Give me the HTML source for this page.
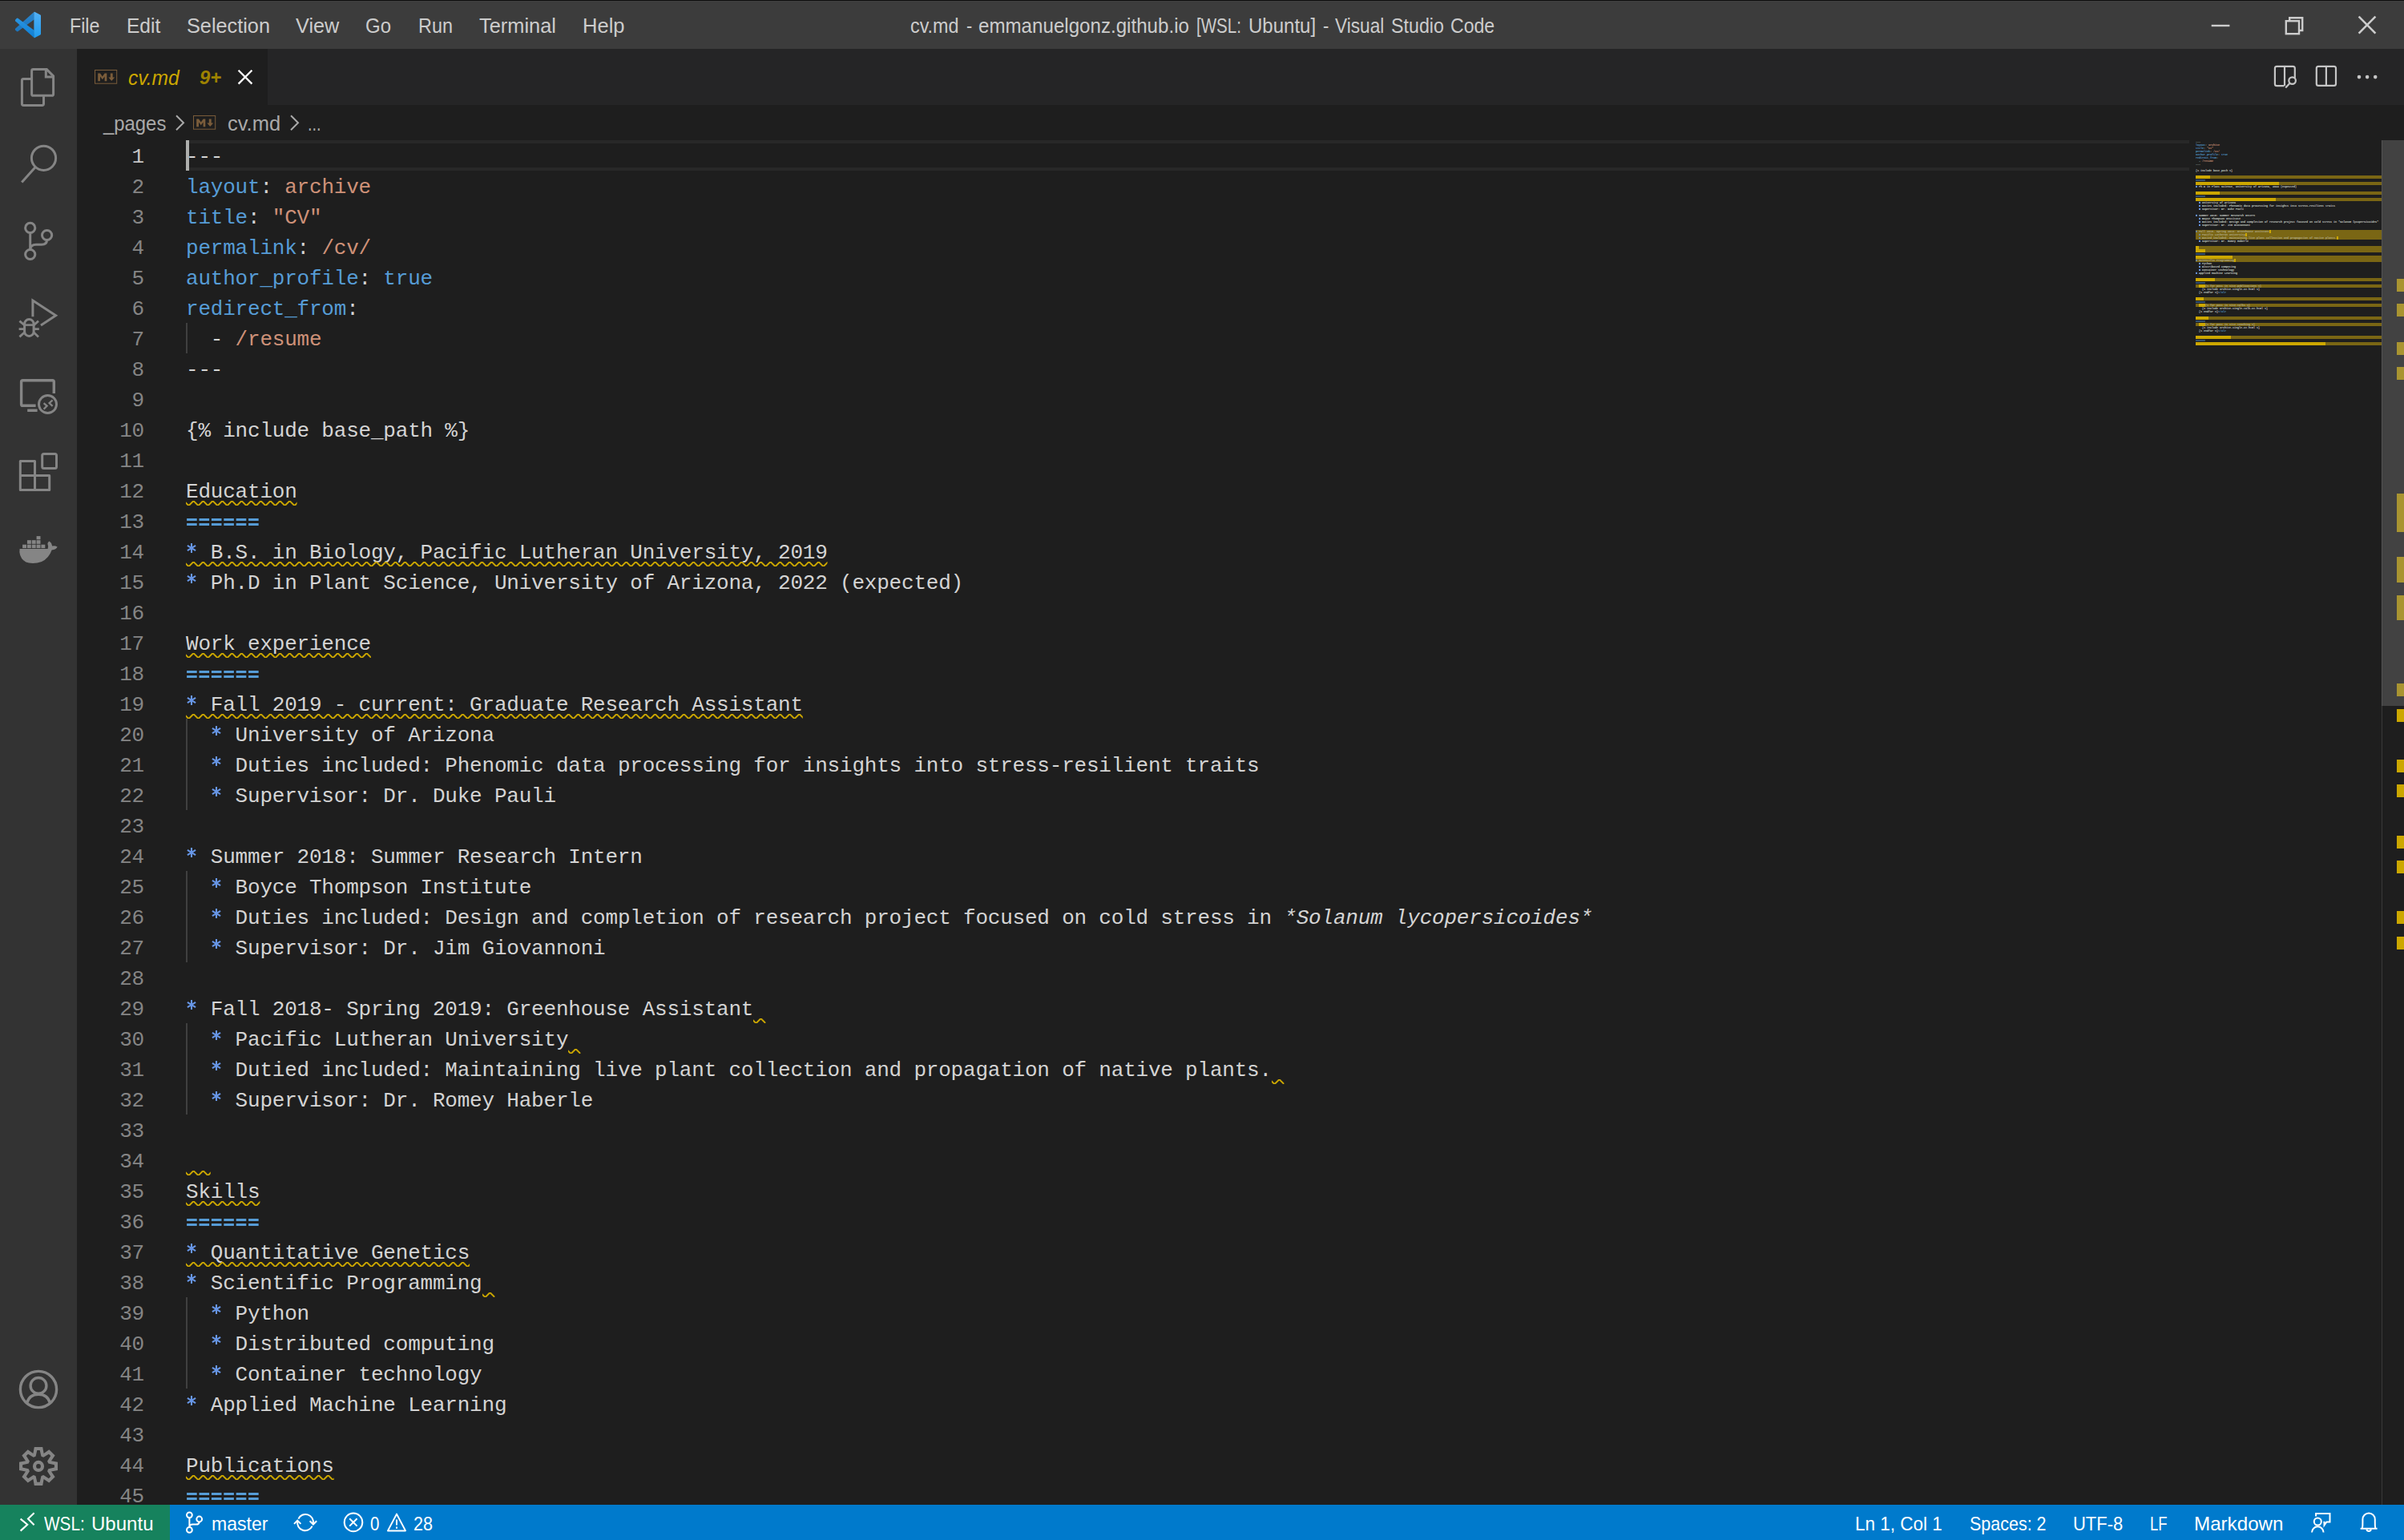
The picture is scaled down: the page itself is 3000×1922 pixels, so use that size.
<!DOCTYPE html>
<html><head><meta charset="utf-8"><title>cv.md - Visual Studio Code</title>
<style>
html,body{margin:0;padding:0;background:#1e1e1e;width:3000px;height:1922px;overflow:hidden}
body{position:relative;font-family:"Liberation Sans",sans-serif;-webkit-font-smoothing:antialiased}
.a{position:absolute}
.t{position:absolute;white-space:pre;line-height:1;transform-origin:0 0}
.ln{position:absolute;left:96px;width:84px;height:38px;line-height:38px;text-align:right;color:#858585;font-family:"Liberation Mono",monospace;font-size:26px;letter-spacing:-0.2px}
.cl{position:absolute;left:232px;height:38px;line-height:38px;white-space:pre;color:#d4d4d4;font-family:"Liberation Mono",monospace;font-size:26px;letter-spacing:-0.206px}
.k{color:#569cd6}.s{color:#ce9178}.st{display:inline-block;width:15.394px;height:1px;position:relative;letter-spacing:0}.st svg{left:-0.6px;bottom:4.8px}.i{font-style:italic}
.ig{position:absolute;left:232px;width:2px;height:38px;background:#404040}
.sq{position:absolute;height:6px}
svg{position:absolute;overflow:visible}
</style></head>
<body>
<svg width="0" height="0" style="left:0;top:0"><defs><pattern id="sq" width="12" height="6" patternUnits="userSpaceOnUse"><g fill="#cca700" transform="scale(2)"><polygon points="5.5,0 2.5,3 1.1,3 4.1,0"/><polygon points="4,0 6,2 6,0.6 5.4,0"/><polygon points="0,2 1,3 2.4,3 0,0.6"/></g></pattern></defs></svg>
<div class="a" style="left:0px;top:0px;width:3000px;height:61px;background:#3c3c3c;"></div>
<div class="a" style="left:0px;top:0px;width:3000px;height:1px;background:#0c0c0c;"></div>
<div class="a" style="left:0px;top:1px;width:3000px;height:1px;background:#404040;"></div>
<div class="a" style="left:0px;top:61px;width:96px;height:1817px;background:#333333;"></div>
<div class="a" style="left:96px;top:61px;width:2904px;height:70px;background:#252526;"></div>
<div class="a" style="left:96px;top:61px;width:238px;height:70px;background:#1e1e1e;"></div>
<div class="a" style="left:0px;top:1878px;width:3000px;height:44px;background:#007acc;"></div>
<div class="a" style="left:0px;top:1878px;width:212px;height:44px;background:#16825d;"></div>
<span class="t" style="left:87.0px;top:19.3px;font-size:26px;color:#cccccc;transform:scaleX(0.8911);">File</span>
<span class="t" style="left:157.7px;top:19.3px;font-size:26px;color:#cccccc;transform:scaleX(0.9431);">Edit</span>
<span class="t" style="left:233.0px;top:19.3px;font-size:26px;color:#cccccc;transform:scaleX(0.9721);">Selection</span>
<span class="t" style="left:369.0px;top:19.3px;font-size:26px;color:#cccccc;transform:scaleX(0.9714);">View</span>
<span class="t" style="left:456.0px;top:19.3px;font-size:26px;color:#cccccc;transform:scaleX(0.9219);">Go</span>
<span class="t" style="left:522.0px;top:19.3px;font-size:26px;color:#cccccc;transform:scaleX(0.9013);">Run</span>
<span class="t" style="left:598.0px;top:19.3px;font-size:26px;color:#cccccc;transform:scaleX(0.9768);">Terminal</span>
<span class="t" style="left:727.0px;top:19.3px;font-size:26px;color:#cccccc;transform:scaleX(0.9826);">Help</span>
<span class="t" style="left:1135.9px;top:19.3px;font-size:26px;color:#cccccc;transform:scaleX(0.8982);">cv.md</span>
<span class="t" style="left:1205.8px;top:19.3px;font-size:26px;color:#cccccc;transform:scaleX(0.8381);">-</span>
<span class="t" style="left:1220.5px;top:19.3px;font-size:26px;color:#cccccc;transform:scaleX(0.9281);">emmanuelgonz.github.io</span>
<span class="t" style="left:1493.0px;top:19.3px;font-size:26px;color:#cccccc;transform:scaleX(0.7904);">[WSL:</span>
<span class="t" style="left:1557.6px;top:19.3px;font-size:26px;color:#cccccc;transform:scaleX(0.9240);">Ubuntu]</span>
<span class="t" style="left:1650.7px;top:19.3px;font-size:26px;color:#cccccc;transform:scaleX(0.8496);">-</span>
<span class="t" style="left:1666.0px;top:19.3px;font-size:26px;color:#cccccc;transform:scaleX(0.8730);">Visual</span>
<span class="t" style="left:1735.6px;top:19.3px;font-size:26px;color:#cccccc;transform:scaleX(0.8940);">Studio</span>
<span class="t" style="left:1809.5px;top:19.3px;font-size:26px;color:#cccccc;transform:scaleX(0.8883);">Code</span>
<svg width="3000" height="140" style="left:0;top:0" viewBox="0 0 3000 140">
<defs><linearGradient id="lg1" x1="0" y1="0" x2="0" y2="1"><stop offset="0" stop-color="#52b0f5"/><stop offset="1" stop-color="#1f9cf0"/></linearGradient><linearGradient id="lg2" x1="0" y1="0" x2="0" y2="1"><stop offset="0" stop-color="#2b86cd"/><stop offset="1" stop-color="#1c75bd"/></linearGradient><linearGradient id="lg3" x1="0" y1="0" x2="0" y2="1"><stop offset="0" stop-color="#2b95e0"/><stop offset="1" stop-color="#0d7fd6"/></linearGradient></defs>
<path d="M42.4,14.9 L42.8,24.2 L22.3,39.3 Q21.5,39.6 20.7,38.9 L19.1,37.3 Q18.5,36.4 19.3,35.6 Z" fill="url(#lg2)"/>
<path d="M22.3,22.7 L42.8,38 L42.4,47 L19.3,26.4 Q18.5,25.6 19.1,24.7 L20.7,23.1 Q21.5,22.4 22.3,22.7 Z" fill="url(#lg3)"/>
<path d="M42.4,14.9 Q42.9,14.6 43.6,15 L50.3,18.4 Q51,18.8 51,19.6 L51,42.3 Q51,43.1 50.3,43.5 L43.6,46.9 Q42.9,47.3 42.4,47 Z" fill="url(#lg1)"/>
<g fill="none" stroke="#cccccc" stroke-width="2.4"><path d="M2759.7,32 H2782.4"/><rect x="2852.8" y="26.2" width="16.2" height="16" /><path d="M2857.2,26 V22.2 H2873.2 V38 H2869.2"/><path d="M2943.6,20.6 L2964.4,41.6 M2964.4,20.6 L2943.6,41.6" stroke-width="2.6"/></g>
<g fill="none" stroke="#c5c5c5" stroke-width="2.2"><path d="M2863.8,97.5 V85.3 Q2863.8,82.9 2861.4,82.9 H2841.3 Q2838.9,82.9 2838.9,85.3 V104.7 Q2838.9,107.1 2841.3,107.1 H2850.5 M2851,82.9 V107.1"/><circle cx="2860.6" cy="100.6" r="4.3"/><path d="M2857.6,103.8 L2852.2,109.6"/><rect x="2890.8" y="82.9" width="24.2" height="24" rx="2.4"/><path d="M2902.9,82.9 V106.9"/></g>
<g fill="#c5c5c5"><circle cx="2944" cy="96.1" r="2.3"/><circle cx="2954.1" cy="96.1" r="2.3"/><circle cx="2964.2" cy="96.1" r="2.3"/></g>
<path d="M297.6,87.8 L314.4,104.6 M314.4,87.8 L297.6,104.6" stroke="#ffffff" stroke-width="2.3" fill="none"/>
</svg>
<svg width="30" height="20" style="left:117.9px;top:87px" viewBox="0 0 30 20"><rect x="0.5" y="0.5" width="27.2" height="16.7" fill="none" stroke="#7a5c3a" stroke-width="1"/><path d="M4.2,14.2 V4.4 H7 L9.8,8.4 L12.6,4.4 H15.3 V14.2 H12.6 V8.6 L9.8,12.3 L7,8.6 V14.2 Z" fill="#7a5c3a"/><path d="M19.8,4.4 H22.7 V9.4 H25.2 L21.25,14 L17.3,9.4 H19.8 Z" fill="#7a5c3a"/></svg>
<span class="t" style="left:160.2px;top:83.8px;font-size:26px;color:#cca700;transform:scaleX(0.9454);font-style:italic;">cv.md</span>
<span class="t" style="left:249.0px;top:85.5px;font-size:23px;color:#9d8200;transform:scaleX(1.0374);font-style:italic;font-weight:bold;">9+</span>
<span class="t" style="left:128.5px;top:140.5px;font-size:26px;color:#a9a9a9;transform:scaleX(0.9184);">_pages</span>
<svg width="30" height="20" style="left:241px;top:144.2px" viewBox="0 0 30 20"><rect x="0.5" y="0.5" width="27.2" height="16.7" fill="none" stroke="#7a5c3a" stroke-width="1"/><path d="M4.2,14.2 V4.4 H7 L9.8,8.4 L12.6,4.4 H15.3 V14.2 H12.6 V8.6 L9.8,12.3 L7,8.6 V14.2 Z" fill="#7a5c3a"/><path d="M19.8,4.4 H22.7 V9.4 H25.2 L21.25,14 L17.3,9.4 H19.8 Z" fill="#7a5c3a"/></svg>
<span class="t" style="left:283.6px;top:140.5px;font-size:26px;color:#a9a9a9;transform:scaleX(0.9812);">cv.md</span>
<span class="t" style="left:384.3px;top:140.5px;font-size:26px;color:#a9a9a9;transform:scaleX(0.7692);">...</span>
<svg width="420" height="44" style="left:0;top:131px" viewBox="0 131 420 44"><g fill="none" stroke="#a9a9a9" stroke-width="2"><path d="M220,144.3 L229,153.3 L220,162.3"/><path d="M363,144.3 L372,153.3 L363,162.3"/></g></svg>
<svg width="96" height="1817" style="left:0;top:61px" viewBox="0 61 96 1817"><g fill="none" stroke="#858585" stroke-width="3" stroke-linejoin="round">
<path d="M39.6,98.5 V88.5 Q39.6,86.6 41.5,86.6 H58.3 L66.6,94.9 V117.4 Q66.6,119.3 64.7,119.3 H41.5 Q39.6,119.3 39.6,117.4 V98.5 H29.3 Q27.4,98.5 27.4,100.4 V129.5 Q27.4,131.4 29.3,131.4 H52.6 Q54.5,131.4 54.5,129.5 V119.8" stroke-linejoin="miter"/><path d="M57.3,87 V95.9 H66.2" stroke-linejoin="miter"/>
<circle cx="54.5" cy="197.3" r="15.1"/><path d="M44.2,208.6 L27.2,227.6" stroke-linecap="butt"/>
<circle cx="37.7" cy="284.4" r="6.1"/><circle cx="58.6" cy="293.5" r="6.1"/><circle cx="37.7" cy="317.5" r="6.1"/><path d="M37.7,290.5 V311.4"/><path d="M58.6,299.6 Q58.4,305.2 52,305.2 H45 Q38.2,305.2 37.8,311.2"/>
<path d="M40.9,395.2 V375 L69.6,393.8 L51,405.9" stroke-linejoin="miter"/><rect x="30.6" y="398.6" width="11.5" height="20.8" rx="5.75"/><path d="M30.6,405.6 H42" stroke-width="2.6"/><path d="M23.6,410.6 H30.4 M42.2,410.6 H48.8 M24.4,400.6 L30.4,405.8 M48,400.6 L42.2,405.8 M24.4,420.4 L30.6,414.8 M48,420.4 L42,414.8" stroke-width="2.8"/>
<path d="M67.3,491 V476.6 Q67.3,474.7 65.4,474.7 H28.5 Q26.6,474.7 26.6,476.6 V504.4 Q26.6,506.3 28.5,506.3 H44.6 M34.2,512.2 H46.6" stroke-width="3.4" stroke-linejoin="miter"/><circle cx="59.5" cy="504.5" r="11"/><path d="M54.6,503.2 L58.6,506.6 L54.6,510.6 M65.6,499.4 L61.6,503 L65.6,506.8" stroke-width="2.3" stroke-linejoin="miter"/>
<rect x="52.7" y="566.6" width="17.8" height="17.8" rx="2"/><path d="M25.3,575.6 H43.5 V593.4 H61.7 V611.4 H25.3 Z M25.3,593.4 H43.5 V611.4" stroke-linejoin="round"/>
<g stroke-width="3.4"><circle cx="48" cy="1734" r="22.6"/><circle cx="48" cy="1729.4" r="9.9"/><path d="M33.6,1751.2 Q36.4,1740.3 48,1740.3 Q59.6,1740.3 62.4,1751.2"/></g>
</g>
<g fill="#858585"><path d="M24.6,685 H59.6 Q60.6,681.5 59.4,678.6 Q59.6,676.4 61.6,675.6 Q64.6,677.6 65.2,681.4 Q68.6,680.6 71.6,682.6 Q70.2,686.2 64.6,686.6 Q61,697 52,701 Q44,704 36,702.6 Q28,701 25.2,693 Q23.8,689 24.6,685 Z"/><rect x="28.10" y="679.7" width="4.9" height="4.4"/><rect x="33.93" y="679.7" width="4.9" height="4.4"/><rect x="39.76" y="679.7" width="4.9" height="4.4"/><rect x="45.59" y="679.7" width="4.9" height="4.4"/><rect x="51.42" y="679.7" width="4.9" height="4.4"/><rect x="33.93" y="674.2" width="4.9" height="4.6"/><rect x="39.76" y="674.2" width="4.9" height="4.6"/><rect x="45.59" y="674.2" width="4.9" height="4.6"/><rect x="45.59" y="669.1" width="4.9" height="4.2"/></g>
<path d="M41.38,1813.92 L42.80,1805.90 L53.20,1805.90 L54.62,1813.92 L61.29,1809.25 L68.65,1816.61 L63.98,1823.28 L72.00,1824.70 L72.00,1835.10 L63.98,1836.52 L68.65,1843.19 L61.29,1850.55 L54.62,1845.88 L53.20,1853.90 L42.80,1853.90 L41.38,1845.88 L34.71,1850.55 L27.35,1843.19 L32.02,1836.52 L24.00,1835.10 L24.00,1824.70 L32.02,1823.28 L27.35,1816.61 L34.71,1809.25 Z M43.18,1818.26 L44.60,1817.60 L46.30,1810.00 L49.70,1810.00 L51.40,1817.60 L52.82,1818.26 L54.29,1818.80 L60.87,1814.63 L63.27,1817.03 L59.10,1823.61 L59.64,1825.08 L60.30,1826.50 L67.90,1828.20 L67.90,1831.60 L60.30,1833.30 L59.64,1834.72 L59.10,1836.19 L63.27,1842.77 L60.87,1845.17 L54.29,1841.00 L52.82,1841.54 L51.40,1842.20 L49.70,1849.80 L46.30,1849.80 L44.60,1842.20 L43.18,1841.54 L41.71,1841.00 L35.13,1845.17 L32.73,1842.77 L36.90,1836.19 L36.36,1834.72 L35.70,1833.30 L28.10,1831.60 L28.10,1828.20 L35.70,1826.50 L36.36,1825.08 L36.90,1823.61 L32.73,1817.03 L35.13,1814.63 L41.71,1818.80 Z" fill="#858585" fill-rule="evenodd"/><circle cx="48" cy="1829.9" r="5" fill="none" stroke="#858585" stroke-width="4.2"/></svg>
<div class="a" style="left:96px;top:175px;width:2904px;height:1703px;overflow:hidden">
<div class="a" style="left:136px;top:0;width:2500px;height:4px;background:#282828"></div><div class="a" style="left:136px;top:34px;width:2500px;height:4px;background:#282828"></div>
<div class="a" style="left:136px;top:0;width:4px;height:38px;background:#aeafad"></div>
<div class="ln" style="left:0;top:2px;color:#c6c6c6">1</div><div class="cl" style="left:136px;top:2px">---</div>
<div class="ln" style="left:0;top:40px;color:#858585">2</div><div class="cl" style="left:136px;top:40px"><span class="k">layout</span>: <span class="s">archive</span></div>
<div class="ln" style="left:0;top:78px;color:#858585">3</div><div class="cl" style="left:136px;top:78px"><span class="k">title</span>: <span class="s">"CV"</span></div>
<div class="ln" style="left:0;top:116px;color:#858585">4</div><div class="cl" style="left:136px;top:116px"><span class="k">permalink</span>: <span class="s">/cv/</span></div>
<div class="ln" style="left:0;top:154px;color:#858585">5</div><div class="cl" style="left:136px;top:154px"><span class="k">author_profile</span>: <span class="k">true</span></div>
<div class="ln" style="left:0;top:192px;color:#858585">6</div><div class="cl" style="left:136px;top:192px"><span class="k">redirect_from</span>:</div>
<div class="ln" style="left:0;top:230px;color:#858585">7</div><div class="ig" style="left:136px;top:228px"></div><div class="cl" style="left:136px;top:230px">  - <span class="s">/resume</span></div>
<div class="ln" style="left:0;top:268px;color:#858585">8</div><div class="cl" style="left:136px;top:268px">---</div>
<div class="ln" style="left:0;top:306px;color:#858585">9</div>
<div class="ln" style="left:0;top:344px;color:#858585">10</div><div class="cl" style="left:136px;top:344px">{% include base_path %}</div>
<div class="ln" style="left:0;top:382px;color:#858585">11</div>
<div class="ln" style="left:0;top:420px;color:#858585">12</div><div class="cl" style="left:136px;top:420px">Education</div><svg class="sq" width="138.6" height="6" style="left:136.0px;top:450px"><rect width="138.6" height="6" fill="url(#sq)"/></svg>
<div class="ln" style="left:0;top:458px;color:#858585">13</div><div class="cl" style="left:136px;top:458px"><span class="st" style="width:92.37px"><svg width="93" height="9" viewBox="0 0 93 9" style="left:0;bottom:2.8px"><rect x="1.10" y="0" width="12.6" height="3" fill="#569cd6"/><rect x="1.10" y="6" width="12.6" height="3" fill="#569cd6"/><rect x="16.50" y="0" width="12.6" height="3" fill="#569cd6"/><rect x="16.50" y="6" width="12.6" height="3" fill="#569cd6"/><rect x="31.89" y="0" width="12.6" height="3" fill="#569cd6"/><rect x="31.89" y="6" width="12.6" height="3" fill="#569cd6"/><rect x="47.29" y="0" width="12.6" height="3" fill="#569cd6"/><rect x="47.29" y="6" width="12.6" height="3" fill="#569cd6"/><rect x="62.68" y="0" width="12.6" height="3" fill="#569cd6"/><rect x="62.68" y="6" width="12.6" height="3" fill="#569cd6"/><rect x="78.07" y="0" width="12.6" height="3" fill="#569cd6"/><rect x="78.07" y="6" width="12.6" height="3" fill="#569cd6"/></svg></span></div>
<div class="ln" style="left:0;top:496px;color:#858585">14</div><div class="cl" style="left:136px;top:496px"><span class="st"><svg width="16" height="16" viewBox="-8 -8 16 16"><path d="M0,-6.1V6.1M-5.1,-3.1L5.1,3.1M-5.1,3.1L5.1,-3.1" stroke="#6796e6" stroke-width="2.1" fill="none"/></svg></span> B.S. in Biology, Pacific Lutheran University, 2019</div><svg class="sq" width="800.5" height="6" style="left:136.0px;top:526px"><rect width="800.5" height="6" fill="url(#sq)"/></svg>
<div class="ln" style="left:0;top:534px;color:#858585">15</div><div class="cl" style="left:136px;top:534px"><span class="st"><svg width="16" height="16" viewBox="-8 -8 16 16"><path d="M0,-6.1V6.1M-5.1,-3.1L5.1,3.1M-5.1,3.1L5.1,-3.1" stroke="#6796e6" stroke-width="2.1" fill="none"/></svg></span> Ph.D in Plant Science, University of Arizona, 2022 (expected)</div>
<div class="ln" style="left:0;top:572px;color:#858585">16</div>
<div class="ln" style="left:0;top:610px;color:#858585">17</div><div class="cl" style="left:136px;top:610px">Work experience</div><svg class="sq" width="230.9" height="6" style="left:136.0px;top:640px"><rect width="230.9" height="6" fill="url(#sq)"/></svg>
<div class="ln" style="left:0;top:648px;color:#858585">18</div><div class="cl" style="left:136px;top:648px"><span class="st" style="width:92.37px"><svg width="93" height="9" viewBox="0 0 93 9" style="left:0;bottom:2.8px"><rect x="1.10" y="0" width="12.6" height="3" fill="#569cd6"/><rect x="1.10" y="6" width="12.6" height="3" fill="#569cd6"/><rect x="16.50" y="0" width="12.6" height="3" fill="#569cd6"/><rect x="16.50" y="6" width="12.6" height="3" fill="#569cd6"/><rect x="31.89" y="0" width="12.6" height="3" fill="#569cd6"/><rect x="31.89" y="6" width="12.6" height="3" fill="#569cd6"/><rect x="47.29" y="0" width="12.6" height="3" fill="#569cd6"/><rect x="47.29" y="6" width="12.6" height="3" fill="#569cd6"/><rect x="62.68" y="0" width="12.6" height="3" fill="#569cd6"/><rect x="62.68" y="6" width="12.6" height="3" fill="#569cd6"/><rect x="78.07" y="0" width="12.6" height="3" fill="#569cd6"/><rect x="78.07" y="6" width="12.6" height="3" fill="#569cd6"/></svg></span></div>
<div class="ln" style="left:0;top:686px;color:#858585">19</div><div class="cl" style="left:136px;top:686px"><span class="st"><svg width="16" height="16" viewBox="-8 -8 16 16"><path d="M0,-6.1V6.1M-5.1,-3.1L5.1,3.1M-5.1,3.1L5.1,-3.1" stroke="#6796e6" stroke-width="2.1" fill="none"/></svg></span> Fall 2019 - current: Graduate Research Assistant</div><svg class="sq" width="769.8" height="6" style="left:136.0px;top:716px"><rect width="769.8" height="6" fill="url(#sq)"/></svg>
<div class="ln" style="left:0;top:724px;color:#858585">20</div><div class="ig" style="left:136px;top:722px"></div><div class="cl" style="left:136px;top:724px">  <span class="st"><svg width="16" height="16" viewBox="-8 -8 16 16"><path d="M0,-6.1V6.1M-5.1,-3.1L5.1,3.1M-5.1,3.1L5.1,-3.1" stroke="#6796e6" stroke-width="2.1" fill="none"/></svg></span> University of Arizona</div>
<div class="ln" style="left:0;top:762px;color:#858585">21</div><div class="ig" style="left:136px;top:760px"></div><div class="cl" style="left:136px;top:762px">  <span class="st"><svg width="16" height="16" viewBox="-8 -8 16 16"><path d="M0,-6.1V6.1M-5.1,-3.1L5.1,3.1M-5.1,3.1L5.1,-3.1" stroke="#6796e6" stroke-width="2.1" fill="none"/></svg></span> Duties included: Phenomic data processing for insights into stress-resilient traits</div>
<div class="ln" style="left:0;top:800px;color:#858585">22</div><div class="ig" style="left:136px;top:798px"></div><div class="cl" style="left:136px;top:800px">  <span class="st"><svg width="16" height="16" viewBox="-8 -8 16 16"><path d="M0,-6.1V6.1M-5.1,-3.1L5.1,3.1M-5.1,3.1L5.1,-3.1" stroke="#6796e6" stroke-width="2.1" fill="none"/></svg></span> Supervisor: Dr. Duke Pauli</div>
<div class="ln" style="left:0;top:838px;color:#858585">23</div>
<div class="ln" style="left:0;top:876px;color:#858585">24</div><div class="cl" style="left:136px;top:876px"><span class="st"><svg width="16" height="16" viewBox="-8 -8 16 16"><path d="M0,-6.1V6.1M-5.1,-3.1L5.1,3.1M-5.1,3.1L5.1,-3.1" stroke="#6796e6" stroke-width="2.1" fill="none"/></svg></span> Summer 2018: Summer Research Intern</div>
<div class="ln" style="left:0;top:914px;color:#858585">25</div><div class="ig" style="left:136px;top:912px"></div><div class="cl" style="left:136px;top:914px">  <span class="st"><svg width="16" height="16" viewBox="-8 -8 16 16"><path d="M0,-6.1V6.1M-5.1,-3.1L5.1,3.1M-5.1,3.1L5.1,-3.1" stroke="#6796e6" stroke-width="2.1" fill="none"/></svg></span> Boyce Thompson Institute</div>
<div class="ln" style="left:0;top:952px;color:#858585">26</div><div class="ig" style="left:136px;top:950px"></div><div class="cl" style="left:136px;top:952px">  <span class="st"><svg width="16" height="16" viewBox="-8 -8 16 16"><path d="M0,-6.1V6.1M-5.1,-3.1L5.1,3.1M-5.1,3.1L5.1,-3.1" stroke="#6796e6" stroke-width="2.1" fill="none"/></svg></span> Duties included: Design and completion of research project focused on cold stress in <span class="i">*Solanum lycopersicoides*</span></div>
<div class="ln" style="left:0;top:990px;color:#858585">27</div><div class="ig" style="left:136px;top:988px"></div><div class="cl" style="left:136px;top:990px">  <span class="st"><svg width="16" height="16" viewBox="-8 -8 16 16"><path d="M0,-6.1V6.1M-5.1,-3.1L5.1,3.1M-5.1,3.1L5.1,-3.1" stroke="#6796e6" stroke-width="2.1" fill="none"/></svg></span> Supervisor: Dr. Jim Giovannoni</div>
<div class="ln" style="left:0;top:1028px;color:#858585">28</div>
<div class="ln" style="left:0;top:1066px;color:#858585">29</div><div class="cl" style="left:136px;top:1066px"><span class="st"><svg width="16" height="16" viewBox="-8 -8 16 16"><path d="M0,-6.1V6.1M-5.1,-3.1L5.1,3.1M-5.1,3.1L5.1,-3.1" stroke="#6796e6" stroke-width="2.1" fill="none"/></svg></span> Fall 2018- Spring 2019: Greenhouse Assistant </div><svg class="sq" width="15.4" height="6" style="left:844.2px;top:1096px"><rect width="15.4" height="6" fill="url(#sq)"/></svg>
<div class="ln" style="left:0;top:1104px;color:#858585">30</div><div class="ig" style="left:136px;top:1102px"></div><div class="cl" style="left:136px;top:1104px">  <span class="st"><svg width="16" height="16" viewBox="-8 -8 16 16"><path d="M0,-6.1V6.1M-5.1,-3.1L5.1,3.1M-5.1,3.1L5.1,-3.1" stroke="#6796e6" stroke-width="2.1" fill="none"/></svg></span> Pacific Lutheran University </div><svg class="sq" width="15.4" height="6" style="left:613.2px;top:1134px"><rect width="15.4" height="6" fill="url(#sq)"/></svg>
<div class="ln" style="left:0;top:1142px;color:#858585">31</div><div class="ig" style="left:136px;top:1140px"></div><div class="cl" style="left:136px;top:1142px">  <span class="st"><svg width="16" height="16" viewBox="-8 -8 16 16"><path d="M0,-6.1V6.1M-5.1,-3.1L5.1,3.1M-5.1,3.1L5.1,-3.1" stroke="#6796e6" stroke-width="2.1" fill="none"/></svg></span> Dutied included: Maintaining live plant collection and propagation of native plants. </div><svg class="sq" width="15.4" height="6" style="left:1490.8px;top:1172px"><rect width="15.4" height="6" fill="url(#sq)"/></svg>
<div class="ln" style="left:0;top:1180px;color:#858585">32</div><div class="ig" style="left:136px;top:1178px"></div><div class="cl" style="left:136px;top:1180px">  <span class="st"><svg width="16" height="16" viewBox="-8 -8 16 16"><path d="M0,-6.1V6.1M-5.1,-3.1L5.1,3.1M-5.1,3.1L5.1,-3.1" stroke="#6796e6" stroke-width="2.1" fill="none"/></svg></span> Supervisor: Dr. Romey Haberle</div>
<div class="ln" style="left:0;top:1218px;color:#858585">33</div>
<div class="ln" style="left:0;top:1256px;color:#858585">34</div><svg class="sq" width="30.8" height="6" style="left:136.0px;top:1286px"><rect width="30.8" height="6" fill="url(#sq)"/></svg>
<div class="ln" style="left:0;top:1294px;color:#858585">35</div><div class="cl" style="left:136px;top:1294px">Skills</div><svg class="sq" width="92.4" height="6" style="left:136.0px;top:1324px"><rect width="92.4" height="6" fill="url(#sq)"/></svg>
<div class="ln" style="left:0;top:1332px;color:#858585">36</div><div class="cl" style="left:136px;top:1332px"><span class="st" style="width:92.37px"><svg width="93" height="9" viewBox="0 0 93 9" style="left:0;bottom:2.8px"><rect x="1.10" y="0" width="12.6" height="3" fill="#569cd6"/><rect x="1.10" y="6" width="12.6" height="3" fill="#569cd6"/><rect x="16.50" y="0" width="12.6" height="3" fill="#569cd6"/><rect x="16.50" y="6" width="12.6" height="3" fill="#569cd6"/><rect x="31.89" y="0" width="12.6" height="3" fill="#569cd6"/><rect x="31.89" y="6" width="12.6" height="3" fill="#569cd6"/><rect x="47.29" y="0" width="12.6" height="3" fill="#569cd6"/><rect x="47.29" y="6" width="12.6" height="3" fill="#569cd6"/><rect x="62.68" y="0" width="12.6" height="3" fill="#569cd6"/><rect x="62.68" y="6" width="12.6" height="3" fill="#569cd6"/><rect x="78.07" y="0" width="12.6" height="3" fill="#569cd6"/><rect x="78.07" y="6" width="12.6" height="3" fill="#569cd6"/></svg></span></div>
<div class="ln" style="left:0;top:1370px;color:#858585">37</div><div class="cl" style="left:136px;top:1370px"><span class="st"><svg width="16" height="16" viewBox="-8 -8 16 16"><path d="M0,-6.1V6.1M-5.1,-3.1L5.1,3.1M-5.1,3.1L5.1,-3.1" stroke="#6796e6" stroke-width="2.1" fill="none"/></svg></span> Quantitative Genetics</div><svg class="sq" width="354.1" height="6" style="left:136.0px;top:1400px"><rect width="354.1" height="6" fill="url(#sq)"/></svg>
<div class="ln" style="left:0;top:1408px;color:#858585">38</div><div class="cl" style="left:136px;top:1408px"><span class="st"><svg width="16" height="16" viewBox="-8 -8 16 16"><path d="M0,-6.1V6.1M-5.1,-3.1L5.1,3.1M-5.1,3.1L5.1,-3.1" stroke="#6796e6" stroke-width="2.1" fill="none"/></svg></span> Scientific Programming </div><svg class="sq" width="15.4" height="6" style="left:505.5px;top:1438px"><rect width="15.4" height="6" fill="url(#sq)"/></svg>
<div class="ln" style="left:0;top:1446px;color:#858585">39</div><div class="ig" style="left:136px;top:1444px"></div><div class="cl" style="left:136px;top:1446px">  <span class="st"><svg width="16" height="16" viewBox="-8 -8 16 16"><path d="M0,-6.1V6.1M-5.1,-3.1L5.1,3.1M-5.1,3.1L5.1,-3.1" stroke="#6796e6" stroke-width="2.1" fill="none"/></svg></span> Python</div>
<div class="ln" style="left:0;top:1484px;color:#858585">40</div><div class="ig" style="left:136px;top:1482px"></div><div class="cl" style="left:136px;top:1484px">  <span class="st"><svg width="16" height="16" viewBox="-8 -8 16 16"><path d="M0,-6.1V6.1M-5.1,-3.1L5.1,3.1M-5.1,3.1L5.1,-3.1" stroke="#6796e6" stroke-width="2.1" fill="none"/></svg></span> Distributed computing</div>
<div class="ln" style="left:0;top:1522px;color:#858585">41</div><div class="ig" style="left:136px;top:1520px"></div><div class="cl" style="left:136px;top:1522px">  <span class="st"><svg width="16" height="16" viewBox="-8 -8 16 16"><path d="M0,-6.1V6.1M-5.1,-3.1L5.1,3.1M-5.1,3.1L5.1,-3.1" stroke="#6796e6" stroke-width="2.1" fill="none"/></svg></span> Container technology</div>
<div class="ln" style="left:0;top:1560px;color:#858585">42</div><div class="cl" style="left:136px;top:1560px"><span class="st"><svg width="16" height="16" viewBox="-8 -8 16 16"><path d="M0,-6.1V6.1M-5.1,-3.1L5.1,3.1M-5.1,3.1L5.1,-3.1" stroke="#6796e6" stroke-width="2.1" fill="none"/></svg></span> Applied Machine Learning</div>
<div class="ln" style="left:0;top:1598px;color:#858585">43</div>
<div class="ln" style="left:0;top:1636px;color:#858585">44</div><div class="cl" style="left:136px;top:1636px">Publications</div><svg class="sq" width="184.7" height="6" style="left:136.0px;top:1666px"><rect width="184.7" height="6" fill="url(#sq)"/></svg>
<div class="ln" style="left:0;top:1674px;color:#858585">45</div><div class="cl" style="left:136px;top:1674px"><span class="st" style="width:92.37px"><svg width="93" height="9" viewBox="0 0 93 9" style="left:0;bottom:2.8px"><rect x="1.10" y="0" width="12.6" height="3" fill="#569cd6"/><rect x="1.10" y="6" width="12.6" height="3" fill="#569cd6"/><rect x="16.50" y="0" width="12.6" height="3" fill="#569cd6"/><rect x="16.50" y="6" width="12.6" height="3" fill="#569cd6"/><rect x="31.89" y="0" width="12.6" height="3" fill="#569cd6"/><rect x="31.89" y="6" width="12.6" height="3" fill="#569cd6"/><rect x="47.29" y="0" width="12.6" height="3" fill="#569cd6"/><rect x="47.29" y="6" width="12.6" height="3" fill="#569cd6"/><rect x="62.68" y="0" width="12.6" height="3" fill="#569cd6"/><rect x="62.68" y="6" width="12.6" height="3" fill="#569cd6"/><rect x="78.07" y="0" width="12.6" height="3" fill="#569cd6"/><rect x="78.07" y="6" width="12.6" height="3" fill="#569cd6"/></svg></span></div>
</div>
<div class="a" style="left:2740px;top:175px;width:232px;height:1703px;overflow:hidden">
<div class="a" style="left:0;top:0px;font:bold 20px/24px 'Liberation Mono',monospace;white-space:pre;color:#d4d4d4;transform:scale(0.16667);transform-origin:0 0;opacity:.95">---</div>
<div class="a" style="left:0;top:4px;font:bold 20px/24px 'Liberation Mono',monospace;white-space:pre;color:#d4d4d4;transform:scale(0.16667);transform-origin:0 0;opacity:.95"><span class="k">layout</span>: <span class="s">archive</span></div>
<div class="a" style="left:0;top:8px;font:bold 20px/24px 'Liberation Mono',monospace;white-space:pre;color:#d4d4d4;transform:scale(0.16667);transform-origin:0 0;opacity:.95"><span class="k">title</span>: <span class="s">"CV"</span></div>
<div class="a" style="left:0;top:12px;font:bold 20px/24px 'Liberation Mono',monospace;white-space:pre;color:#d4d4d4;transform:scale(0.16667);transform-origin:0 0;opacity:.95"><span class="k">permalink</span>: <span class="s">/cv/</span></div>
<div class="a" style="left:0;top:16px;font:bold 20px/24px 'Liberation Mono',monospace;white-space:pre;color:#d4d4d4;transform:scale(0.16667);transform-origin:0 0;opacity:.95"><span class="k">author_profile</span>: <span class="k">true</span></div>
<div class="a" style="left:0;top:20px;font:bold 20px/24px 'Liberation Mono',monospace;white-space:pre;color:#d4d4d4;transform:scale(0.16667);transform-origin:0 0;opacity:.95"><span class="k">redirect_from</span>:</div>
<div class="a" style="left:0;top:24px;font:bold 20px/24px 'Liberation Mono',monospace;white-space:pre;color:#d4d4d4;transform:scale(0.16667);transform-origin:0 0;opacity:.95">  - <span class="s">/resume</span></div>
<div class="a" style="left:0;top:28px;font:bold 20px/24px 'Liberation Mono',monospace;white-space:pre;color:#d4d4d4;transform:scale(0.16667);transform-origin:0 0;opacity:.95">---</div>

<div class="a" style="left:0;top:36px;font:bold 20px/24px 'Liberation Mono',monospace;white-space:pre;color:#d4d4d4;transform:scale(0.16667);transform-origin:0 0;opacity:.95">{% include base_path %}</div>

<div class="a" style="left:0;top:44px;width:232px;height:4px;background:#7a6614"></div><div class="a" style="left:0px;top:44px;width:18px;height:4px;background:#cca700"></div>
<div class="a" style="left:0;top:48px;font:bold 20px/24px 'Liberation Mono',monospace;white-space:pre;color:#d4d4d4;transform:scale(0.16667);transform-origin:0 0;opacity:.95"><span class="k">======</span></div>
<div class="a" style="left:0;top:52px;width:232px;height:4px;background:#7a6614"></div><div class="a" style="left:0px;top:52px;width:104px;height:4px;background:#cca700"></div>
<div class="a" style="left:0;top:56px;font:bold 20px/24px 'Liberation Mono',monospace;white-space:pre;color:#d4d4d4;transform:scale(0.16667);transform-origin:0 0;opacity:.95"><span style="display:inline-block;width:12px;height:13px;vertical-align:-1px;background:#6796e6"></span> Ph.D in Plant Science, University of Arizona, 2022 (expected)</div>

<div class="a" style="left:0;top:64px;width:232px;height:4px;background:#7a6614"></div><div class="a" style="left:0px;top:64px;width:30px;height:4px;background:#cca700"></div>
<div class="a" style="left:0;top:68px;font:bold 20px/24px 'Liberation Mono',monospace;white-space:pre;color:#d4d4d4;transform:scale(0.16667);transform-origin:0 0;opacity:.95"><span class="k">======</span></div>
<div class="a" style="left:0;top:72px;width:232px;height:4px;background:#7a6614"></div><div class="a" style="left:0px;top:72px;width:100px;height:4px;background:#cca700"></div>
<div class="a" style="left:0;top:76px;font:bold 20px/24px 'Liberation Mono',monospace;white-space:pre;color:#d4d4d4;transform:scale(0.16667);transform-origin:0 0;opacity:.95">  <span style="display:inline-block;width:12px;height:13px;vertical-align:-1px;background:#6796e6"></span> University of Arizona</div>
<div class="a" style="left:0;top:80px;font:bold 20px/24px 'Liberation Mono',monospace;white-space:pre;color:#d4d4d4;transform:scale(0.16667);transform-origin:0 0;opacity:.95">  <span style="display:inline-block;width:12px;height:13px;vertical-align:-1px;background:#6796e6"></span> Duties included: Phenomic data processing for insights into stress-resilient traits</div>
<div class="a" style="left:0;top:84px;font:bold 20px/24px 'Liberation Mono',monospace;white-space:pre;color:#d4d4d4;transform:scale(0.16667);transform-origin:0 0;opacity:.95">  <span style="display:inline-block;width:12px;height:13px;vertical-align:-1px;background:#6796e6"></span> Supervisor: Dr. Duke Pauli</div>

<div class="a" style="left:0;top:92px;font:bold 20px/24px 'Liberation Mono',monospace;white-space:pre;color:#d4d4d4;transform:scale(0.16667);transform-origin:0 0;opacity:.95"><span style="display:inline-block;width:12px;height:13px;vertical-align:-1px;background:#6796e6"></span> Summer 2018: Summer Research Intern</div>
<div class="a" style="left:0;top:96px;font:bold 20px/24px 'Liberation Mono',monospace;white-space:pre;color:#d4d4d4;transform:scale(0.16667);transform-origin:0 0;opacity:.95">  <span style="display:inline-block;width:12px;height:13px;vertical-align:-1px;background:#6796e6"></span> Boyce Thompson Institute</div>
<div class="a" style="left:0;top:100px;font:bold 20px/24px 'Liberation Mono',monospace;white-space:pre;color:#d4d4d4;transform:scale(0.16667);transform-origin:0 0;opacity:.95">  <span style="display:inline-block;width:12px;height:13px;vertical-align:-1px;background:#6796e6"></span> Duties included: Design and completion of research project focused on cold stress in <span class="i">*Solanum lycopersicoides*</span></div>
<div class="a" style="left:0;top:104px;font:bold 20px/24px 'Liberation Mono',monospace;white-space:pre;color:#d4d4d4;transform:scale(0.16667);transform-origin:0 0;opacity:.95">  <span style="display:inline-block;width:12px;height:13px;vertical-align:-1px;background:#6796e6"></span> Supervisor: Dr. Jim Giovannoni</div>

<div class="a" style="left:0;top:112px;width:232px;height:4px;background:#7a6614"></div><div class="a" style="left:0;top:112px;font:bold 20px/24px 'Liberation Mono',monospace;white-space:pre;color:#d4d4d4;transform:scale(0.16667);transform-origin:0 0;opacity:.6"><span style="display:inline-block;width:12px;height:13px;vertical-align:-1px;background:#6796e6"></span> Fall 2018- Spring 2019: Greenhouse Assistant </div><div class="a" style="left:92px;top:112px;width:2px;height:4px;background:#cca700"></div>
<div class="a" style="left:0;top:116px;width:232px;height:4px;background:#7a6614"></div><div class="a" style="left:0;top:116px;font:bold 20px/24px 'Liberation Mono',monospace;white-space:pre;color:#d4d4d4;transform:scale(0.16667);transform-origin:0 0;opacity:.6">  <span style="display:inline-block;width:12px;height:13px;vertical-align:-1px;background:#6796e6"></span> Pacific Lutheran University </div><div class="a" style="left:62px;top:116px;width:2px;height:4px;background:#cca700"></div>
<div class="a" style="left:0;top:120px;width:232px;height:4px;background:#7a6614"></div><div class="a" style="left:0;top:120px;font:bold 20px/24px 'Liberation Mono',monospace;white-space:pre;color:#d4d4d4;transform:scale(0.16667);transform-origin:0 0;opacity:.6">  <span style="display:inline-block;width:12px;height:13px;vertical-align:-1px;background:#6796e6"></span> Dutied included: Maintaining live plant collection and propagation of native plants. </div><div class="a" style="left:176px;top:120px;width:2px;height:4px;background:#cca700"></div>
<div class="a" style="left:0;top:124px;font:bold 20px/24px 'Liberation Mono',monospace;white-space:pre;color:#d4d4d4;transform:scale(0.16667);transform-origin:0 0;opacity:.95">  <span style="display:inline-block;width:12px;height:13px;vertical-align:-1px;background:#6796e6"></span> Supervisor: Dr. Romey Haberle</div>

<div class="a" style="left:0;top:132px;width:232px;height:4px;background:#7a6614"></div><div class="a" style="left:0px;top:132px;width:4px;height:4px;background:#cca700"></div>
<div class="a" style="left:0;top:136px;width:232px;height:4px;background:#7a6614"></div><div class="a" style="left:0px;top:136px;width:12px;height:4px;background:#cca700"></div>
<div class="a" style="left:0;top:140px;font:bold 20px/24px 'Liberation Mono',monospace;white-space:pre;color:#d4d4d4;transform:scale(0.16667);transform-origin:0 0;opacity:.95"><span class="k">======</span></div>
<div class="a" style="left:0;top:144px;width:232px;height:4px;background:#7a6614"></div><div class="a" style="left:0px;top:144px;width:46px;height:4px;background:#cca700"></div>
<div class="a" style="left:0;top:148px;width:232px;height:4px;background:#7a6614"></div><div class="a" style="left:0;top:148px;font:bold 20px/24px 'Liberation Mono',monospace;white-space:pre;color:#d4d4d4;transform:scale(0.16667);transform-origin:0 0;opacity:.6"><span style="display:inline-block;width:12px;height:13px;vertical-align:-1px;background:#6796e6"></span> Scientific Programming </div><div class="a" style="left:48px;top:148px;width:2px;height:4px;background:#cca700"></div>
<div class="a" style="left:0;top:152px;font:bold 20px/24px 'Liberation Mono',monospace;white-space:pre;color:#d4d4d4;transform:scale(0.16667);transform-origin:0 0;opacity:.95">  <span style="display:inline-block;width:12px;height:13px;vertical-align:-1px;background:#6796e6"></span> Python</div>
<div class="a" style="left:0;top:156px;font:bold 20px/24px 'Liberation Mono',monospace;white-space:pre;color:#d4d4d4;transform:scale(0.16667);transform-origin:0 0;opacity:.95">  <span style="display:inline-block;width:12px;height:13px;vertical-align:-1px;background:#6796e6"></span> Distributed computing</div>
<div class="a" style="left:0;top:160px;font:bold 20px/24px 'Liberation Mono',monospace;white-space:pre;color:#d4d4d4;transform:scale(0.16667);transform-origin:0 0;opacity:.95">  <span style="display:inline-block;width:12px;height:13px;vertical-align:-1px;background:#6796e6"></span> Container technology</div>
<div class="a" style="left:0;top:164px;font:bold 20px/24px 'Liberation Mono',monospace;white-space:pre;color:#d4d4d4;transform:scale(0.16667);transform-origin:0 0;opacity:.95"><span style="display:inline-block;width:12px;height:13px;vertical-align:-1px;background:#6796e6"></span> Applied Machine Learning</div>

<div class="a" style="left:0;top:172px;width:232px;height:4px;background:#7a6614"></div><div class="a" style="left:0px;top:172px;width:24px;height:4px;background:#cca700"></div>
<div class="a" style="left:0;top:176px;font:bold 20px/24px 'Liberation Mono',monospace;white-space:pre;color:#d4d4d4;transform:scale(0.16667);transform-origin:0 0;opacity:.95"><span class="k">======</span></div>
<div class="a" style="left:0;top:180px;width:232px;height:4px;background:#7a6614"></div><div class="a" style="left:4px;top:180px;width:8px;height:4px;background:#cca700"></div><div class="a" style="left:0;top:180px;font:bold 20px/24px 'Liberation Mono',monospace;white-space:pre;color:#d4d4d4;transform:scale(0.16667);transform-origin:0 0;opacity:.6">      {% for post in site.publications %}</div>
<div class="a" style="left:0;top:184px;font:bold 20px/24px 'Liberation Mono',monospace;white-space:pre;color:#d4d4d4;transform:scale(0.16667);transform-origin:0 0;opacity:.95">    {% include archive-single-cv.html %}</div>
<div class="a" style="left:0;top:188px;font:bold 20px/24px 'Liberation Mono',monospace;white-space:pre;color:#d4d4d4;transform:scale(0.16667);transform-origin:0 0;opacity:.95">  {% endfor %}<span class="k">&lt;/ul&gt;</span></div>

<div class="a" style="left:0;top:196px;width:232px;height:4px;background:#7a6614"></div><div class="a" style="left:0px;top:196px;width:10px;height:4px;background:#cca700"></div>
<div class="a" style="left:0;top:200px;font:bold 20px/24px 'Liberation Mono',monospace;white-space:pre;color:#d4d4d4;transform:scale(0.16667);transform-origin:0 0;opacity:.95"><span class="k">======</span></div>
<div class="a" style="left:0;top:204px;width:232px;height:4px;background:#7a6614"></div><div class="a" style="left:4px;top:204px;width:8px;height:4px;background:#cca700"></div><div class="a" style="left:0;top:204px;font:bold 20px/24px 'Liberation Mono',monospace;white-space:pre;color:#d4d4d4;transform:scale(0.16667);transform-origin:0 0;opacity:.6">      {% for post in site.talks %}</div>
<div class="a" style="left:0;top:208px;font:bold 20px/24px 'Liberation Mono',monospace;white-space:pre;color:#d4d4d4;transform:scale(0.16667);transform-origin:0 0;opacity:.95">    {% include archive-single-talk-cv.html %}</div>
<div class="a" style="left:0;top:212px;font:bold 20px/24px 'Liberation Mono',monospace;white-space:pre;color:#d4d4d4;transform:scale(0.16667);transform-origin:0 0;opacity:.95">  {% endfor %}<span class="k">&lt;/ul&gt;</span></div>

<div class="a" style="left:0;top:220px;width:232px;height:4px;background:#7a6614"></div><div class="a" style="left:0px;top:220px;width:16px;height:4px;background:#cca700"></div>
<div class="a" style="left:0;top:224px;font:bold 20px/24px 'Liberation Mono',monospace;white-space:pre;color:#d4d4d4;transform:scale(0.16667);transform-origin:0 0;opacity:.95"><span class="k">======</span></div>
<div class="a" style="left:0;top:228px;width:232px;height:4px;background:#7a6614"></div><div class="a" style="left:4px;top:228px;width:8px;height:4px;background:#cca700"></div><div class="a" style="left:0;top:228px;font:bold 20px/24px 'Liberation Mono',monospace;white-space:pre;color:#d4d4d4;transform:scale(0.16667);transform-origin:0 0;opacity:.6">      {% for post in site.teaching %}</div>
<div class="a" style="left:0;top:232px;font:bold 20px/24px 'Liberation Mono',monospace;white-space:pre;color:#d4d4d4;transform:scale(0.16667);transform-origin:0 0;opacity:.95">    {% include archive-single-cv.html %}</div>
<div class="a" style="left:0;top:236px;font:bold 20px/24px 'Liberation Mono',monospace;white-space:pre;color:#d4d4d4;transform:scale(0.16667);transform-origin:0 0;opacity:.95">  {% endfor %}<span class="k">&lt;/ul&gt;</span></div>

<div class="a" style="left:0;top:244px;width:232px;height:4px;background:#7a6614"></div><div class="a" style="left:0px;top:244px;width:44px;height:4px;background:#cca700"></div>
<div class="a" style="left:0;top:248px;font:bold 20px/24px 'Liberation Mono',monospace;white-space:pre;color:#d4d4d4;transform:scale(0.16667);transform-origin:0 0;opacity:.95"><span class="k">======</span></div>
<div class="a" style="left:0;top:252px;width:232px;height:4px;background:#7a6614"></div><div class="a" style="left:0px;top:252px;width:162px;height:4px;background:#cca700"></div>
</div>
<div class="a" style="left:2972px;top:175px;width:1px;height:1703px;background:#383838;"></div>
<div class="a" style="left:2972px;top:175px;width:28px;height:706px;background:#424242;"></div>
<div class="a" style="left:2972px;top:175px;width:1px;height:706px;background:#525252;"></div>
<div class="a" style="left:2991px;top:348px;width:9px;height:16px;background:#a99431;"></div>
<div class="a" style="left:2991px;top:379px;width:9px;height:16px;background:#a99431;"></div>
<div class="a" style="left:2991px;top:427px;width:9px;height:16px;background:#a99431;"></div>
<div class="a" style="left:2991px;top:458px;width:9px;height:16px;background:#a99431;"></div>
<div class="a" style="left:2991px;top:616px;width:9px;height:48px;background:#a99431;"></div>
<div class="a" style="left:2991px;top:695px;width:9px;height:32px;background:#a99431;"></div>
<div class="a" style="left:2991px;top:743px;width:9px;height:31px;background:#a99431;"></div>
<div class="a" style="left:2991px;top:853px;width:9px;height:16px;background:#a99431;"></div>
<div class="a" style="left:2991px;top:885px;width:9px;height:16px;background:#cca700;"></div>
<div class="a" style="left:2991px;top:948px;width:9px;height:16px;background:#cca700;"></div>
<div class="a" style="left:2991px;top:979px;width:9px;height:16px;background:#cca700;"></div>
<div class="a" style="left:2991px;top:1043px;width:9px;height:16px;background:#cca700;"></div>
<div class="a" style="left:2991px;top:1074px;width:9px;height:16px;background:#cca700;"></div>
<div class="a" style="left:2991px;top:1137px;width:9px;height:16px;background:#cca700;"></div>
<div class="a" style="left:2991px;top:1169px;width:9px;height:16px;background:#cca700;"></div>
<span class="t" style="left:54.7px;top:1890.1px;font-size:24px;color:#ffffff;transform:scaleX(0.8640);">WSL:</span>
<span class="t" style="left:114.1px;top:1890.1px;font-size:24px;color:#ffffff;transform:scaleX(1.0013);">Ubuntu</span>
<span class="t" style="left:264.0px;top:1890.1px;font-size:24px;color:#ffffff;transform:scaleX(0.9602);">master</span>
<span class="t" style="left:462.2px;top:1890.1px;font-size:24px;color:#ffffff;transform:scaleX(0.8559);">0</span>
<span class="t" style="left:516.4px;top:1890.1px;font-size:24px;color:#ffffff;transform:scaleX(0.9009);">28</span>
<span class="t" style="left:2314.8px;top:1890.1px;font-size:24px;color:#ffffff;transform:scaleX(0.9376);">Ln 1, Col 1</span>
<span class="t" style="left:2457.9px;top:1890.1px;font-size:24px;color:#ffffff;transform:scaleX(0.8952);">Spaces: 2</span>
<span class="t" style="left:2587.0px;top:1890.1px;font-size:24px;color:#ffffff;transform:scaleX(0.9156);">UTF-8</span>
<span class="t" style="left:2683.2px;top:1890.1px;font-size:24px;color:#ffffff;transform:scaleX(0.7725);">LF</span>
<span class="t" style="left:2738.1px;top:1890.1px;font-size:24px;color:#ffffff;transform:scaleX(1.0067);">Markdown</span>
<svg width="3000" height="44" style="left:0;top:1878px" viewBox="0 1878 3000 44"><g fill="none" stroke="#ffffff" stroke-width="2">
<path d="M25.6,1895.6 L34.2,1902.8 L25.6,1910.6 M42.6,1888.2 L35,1895.5 L42.6,1903.2" stroke-width="2.1"/>
<circle cx="236.4" cy="1890.8" r="3.4"/><circle cx="248.7" cy="1896" r="3.4"/><circle cx="236.4" cy="1909.4" r="3.4"/><path d="M236.4,1894.2 V1906 M248.7,1899.4 Q248.5,1902.6 245,1902.6 H240.4 Q236.6,1902.6 236.4,1906"/>
<path d="M372.4,1895.6 A9.7,9.7 0 0 1 390.8,1901.2 M389.6,1904.6 A9.7,9.7 0 0 1 371.3,1898.6"/><path d="M386.6,1898.2 L390.9,1902.5 L395.2,1898.2 M367,1901.9 L371.2,1897.7 L375.4,1901.9" />
<circle cx="441" cy="1899.9" r="11.3"/><path d="M436.2,1895.2 L445.6,1904.6 M445.6,1895.2 L436.2,1904.6"/>
<path d="M495,1889.6 L506,1910.4 H484 Z" stroke-linejoin="round"/><path d="M495,1896.4 V1903.6 M495,1905.6 V1907.8"/>
<path d="M2890.1,1892.4 V1888.9 H2907.5 V1899.4 H2903.4 L2900.5,1903.6 V1899.8 H2899.4"/><circle cx="2892.3" cy="1899" r="4.5"/><path d="M2885,1912.6 A7.3,7.3 0 0 1 2899.6,1912.6"/>
<path d="M2945.6,1907.8 H2966.6 M2947.9,1907.6 C2948.7,1904 2948.4,1900 2948.4,1896.2 A7.7,7.7 0 0 1 2963.8,1896.2 C2963.8,1900 2963.5,1904 2964.3,1907.6" stroke-linejoin="round"/><path d="M2953.3,1908.8 A2.9,2.9 0 0 0 2958.9,1908.8"/>
</g></svg>
</body></html>
